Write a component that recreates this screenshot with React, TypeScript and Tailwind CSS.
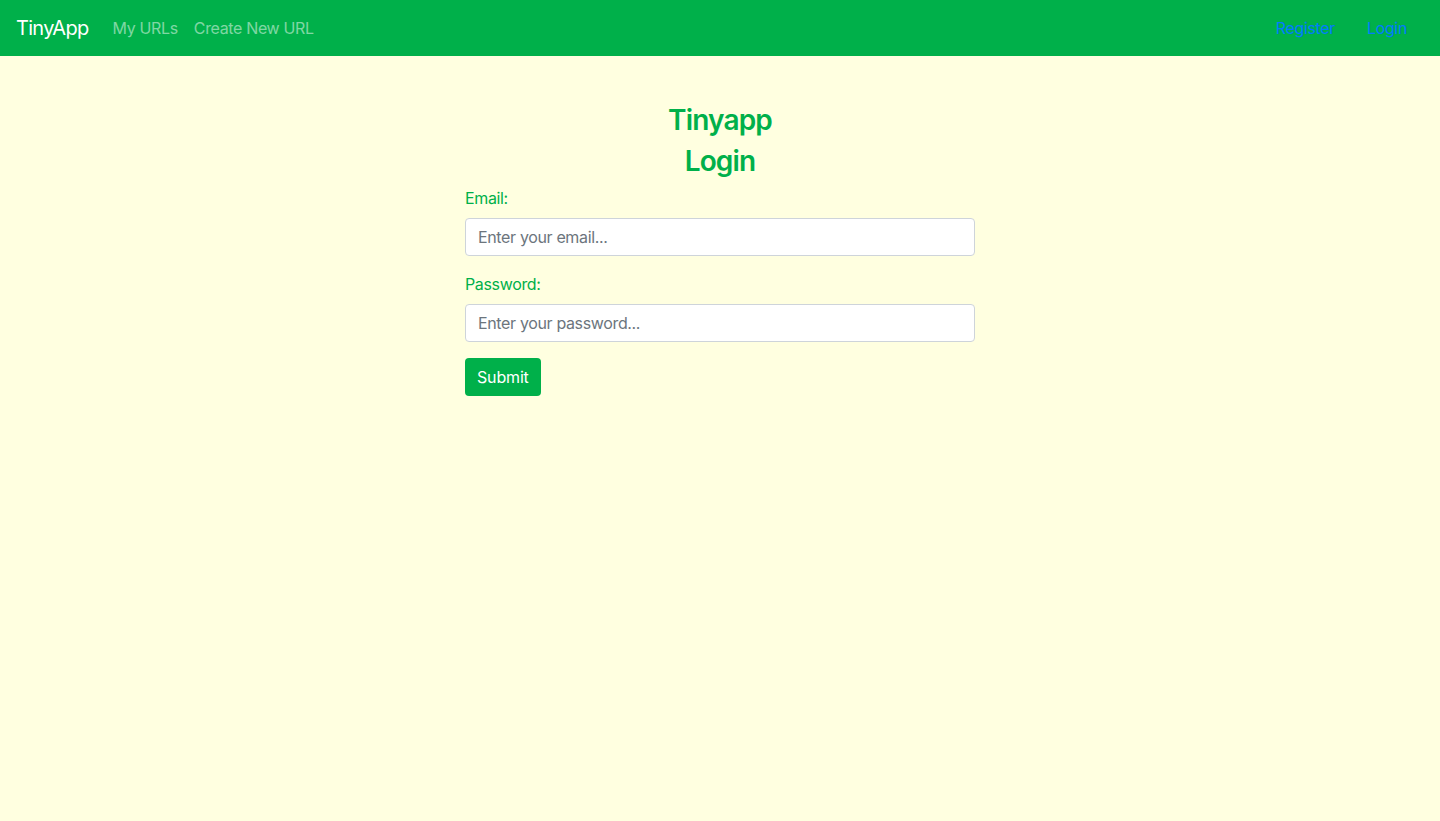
import React from "react";

export default function App() {
  return (
    <div className="min-h-[821px] bg-[#ffffe0] font-['Inter','Noto_Sans',sans-serif] text-base tracking-[-0.022em]">
      <nav className="flex h-14 items-center bg-[#00b04a] px-4">
        <span className="mr-4 text-[20px] leading-[30px] tracking-[-0.035em] text-white">TinyApp</span>
        <span className="px-2 text-white/50">My URLs</span>
        <span className="px-2 text-white/50">Create New URL</span>
        <div className="ml-auto flex items-center pr-[17px]">
          <span className="text-[#007bff]">Register</span>
          <span className="ml-[32px] text-[#007bff]">Login</span>
        </div>
      </nav>
      <main className="mx-auto w-[510px] pt-12">
        <h3 className="mb-2 text-center text-[28px] font-semibold leading-[33px] tracking-[-0.03em] text-[#00b04a]">Tinyapp</h3>
        <h3 className="mb-2 text-center text-[28px] font-semibold leading-[33px] tracking-[-0.03em] text-[#00b04a]">Login</h3>
        <form onSubmit={(e) => e.preventDefault()}>
          <div className="mb-4">
            <label className="mb-2 block leading-6 text-[#00b04a]">Email:</label>
            <input
              type="email"
              placeholder="Enter your email..."
              className="block h-[38px] w-full rounded border border-[#ced4da] bg-white px-3 leading-6 tracking-[-0.022em] text-[#495057] placeholder:text-[#6c757d] outline-none"
            />
          </div>
          <div className="mb-4">
            <label className="mb-2 block leading-6 text-[#00b04a]">Password:</label>
            <input
              type="password"
              placeholder="Enter your password..."
              className="block h-[38px] w-full rounded border border-[#ced4da] bg-white px-3 leading-6 tracking-[-0.022em] text-[#495057] placeholder:text-[#6c757d] outline-none"
            />
          </div>
          <button
            type="submit"
            className="h-[38px] rounded bg-[#00b04a] px-3 leading-6 tracking-[-0.01em] text-white"
          >
            Submit
          </button>
        </form>
      </main>
    </div>
  );
}
